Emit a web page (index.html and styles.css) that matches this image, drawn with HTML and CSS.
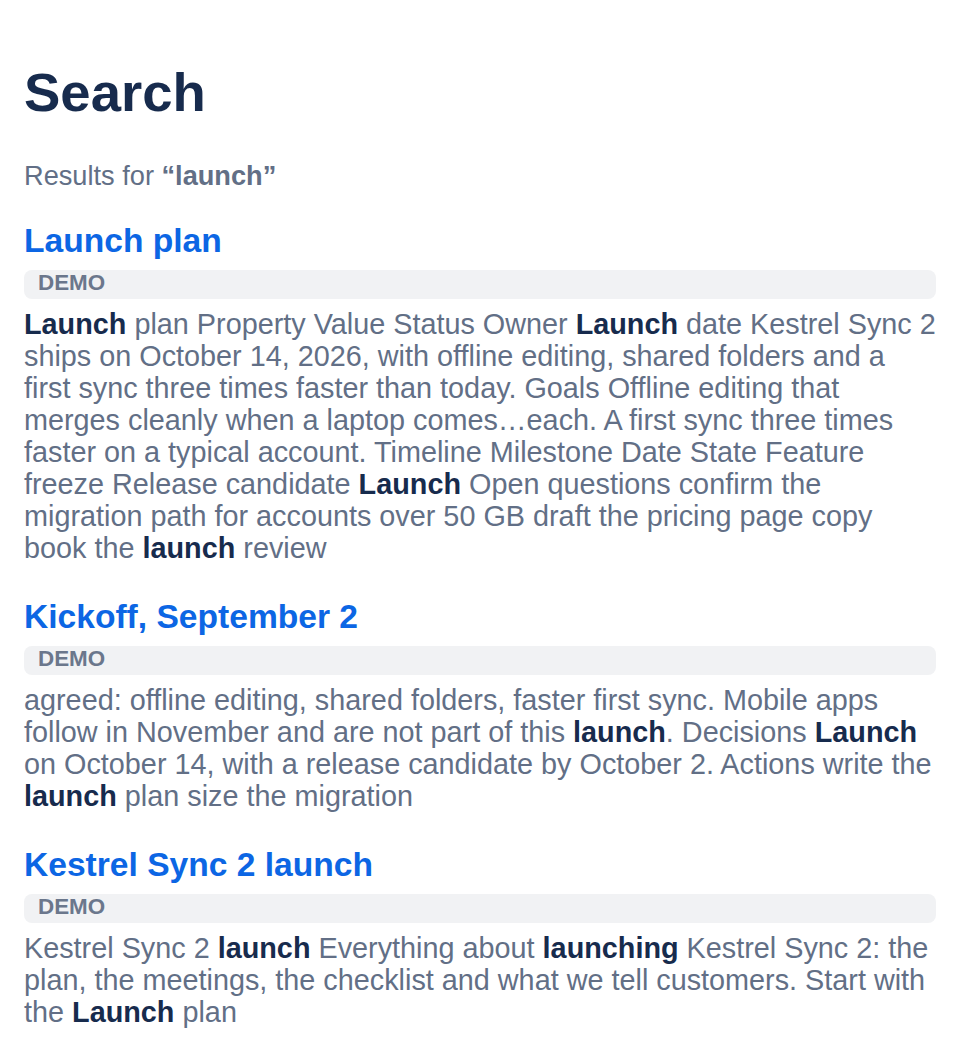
FILE: index.html
```html
<!DOCTYPE html>
<html lang="en">
<head>
<meta charset="utf-8">
<title>Search</title>
<link rel="stylesheet" href="styles.css">
</head>
<body>
<main class="page">
  <h1 class="title">Search</h1>
  <p class="summary">Results for <strong>“launch”</strong></p>

  <section class="result">
    <h2 class="result-title">Launch plan</h2>
    <div class="badge">DEMO</div>
    <p class="snippet"><b>Launch</b> plan Property Value Status Owner <b>Launch</b> date Kestrel Sync 2 ships on October 14, 2026, with offline editing, shared folders and a first sync three times faster than today. Goals Offline editing that merges cleanly when a laptop comes…each. A first sync three times faster on a typical account. Timeline Milestone Date State Feature freeze Release candidate <b>Launch</b> Open questions confirm the migration path for accounts over 50 GB draft the pricing page copy book the <b>launch</b> review</p>
  </section>

  <section class="result">
    <h2 class="result-title">Kickoff, September 2</h2>
    <div class="badge">DEMO</div>
    <p class="snippet">agreed: offline editing, shared folders, faster first sync. Mobile apps follow in November and are not part of this <b>launch</b>. Decisions <b>Launch</b> on October 14, with a release candidate by October 2. Actions write the <b>launch</b> plan size the migration</p>
  </section>

  <section class="result">
    <h2 class="result-title">Kestrel Sync 2 launch</h2>
    <div class="badge">DEMO</div>
    <p class="snippet">Kestrel Sync 2 <b>launch</b> Everything about <b>launching</b> Kestrel Sync 2: the plan, the meetings, the checklist and what we tell customers. Start with the <b>Launch</b> plan</p>
  </section>
</main>
</body>
</html>
```

FILE: styles.css
```css
html, body {
  margin: 0;
  padding: 0;
  background: #ffffff;
}

body {
  font-family: "Liberation Sans", Arial, sans-serif;
  color: #626f86;
}

.page {
  padding: 61px 24px 0;
}

.title {
  margin: 0;
  font-size: 54.5px;
  line-height: 64px;
  font-weight: 700;
  color: #172b4d;
}

.summary {
  margin: 35px 0 0;
  font-size: 27.2px;
  line-height: 31px;
  color: #626f86;
}

.summary strong {
  font-weight: 700;
  color: #626f86;
}

.result {
  margin-top: 33px;
}

.summary + .result {
  margin-top: 30px;
}

.result-title {
  margin: 0;
  font-size: 33.6px;
  line-height: 39px;
  font-weight: 700;
  color: #0c66e4;
}

.badge {
  margin-top: 10px;
  padding: 0 14px 4px;
  height: 25px;
  line-height: 25px;
  font-size: 22.4px;
  font-weight: 700;
  color: #6b778c;
  background: #f1f2f4;
  border-radius: 8px;
}

.snippet {
  margin: 9px -3px 0 0;
  font-size: 28.8px;
  line-height: 32px;
  color: #626f86;
}

.snippet b {
  font-weight: 700;
  color: #172b4d;
}
```
